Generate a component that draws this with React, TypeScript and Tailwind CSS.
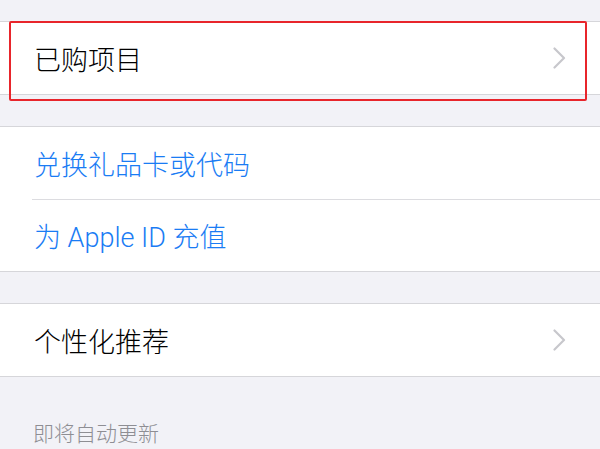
const font = { fontFamily: '"Noto Sans CJK SC", "Noto Sans", sans-serif' };
const mixed = { fontFamily: 'Roboto, "Noto Sans CJK SC", sans-serif' };

function Chevron() {
  return (
    <svg width="13" height="22" viewBox="0 0 13 22" fill="none" className="shrink-0">
      <polyline
        points="1.5,1.5 11,11 1.5,20.5"
        stroke="#c7c7cc"
        strokeWidth="2.2"
        strokeLinecap="round"
        strokeLinejoin="round"
      />
    </svg>
  );
}

function NavRow({ label }: { label: string }) {
  return (
    <div className="flex h-[72px] items-center justify-between bg-white pl-[34px] pr-[34px]">
      <span className="text-[27px] font-light leading-none text-black">{label}</span>
      <Chevron />
    </div>
  );
}

export default function App() {
  return (
    <div
      className="relative h-[449px] w-full overflow-hidden bg-[#f2f2f7]"
      style={font}
    >
      <div className="pt-[21px]">
        <section className="border-y border-[#d6d6da]">
          <NavRow label="已购项目" />
        </section>

        <section className="mt-[31px] border-y border-[#d6d6da] bg-white">
          <div className="pl-[32px]">
            <div className="flex h-[73px] items-center border-b border-[#dcdce0] pl-[2px]">
              <span className="text-[27px] font-light leading-none text-[#1a7cf4]">兑换礼品卡或代码</span>
            </div>
          </div>
          <div className="flex h-[71px] items-center pl-[34px] pt-[6px]">
            <span className="text-[27px] font-light leading-none text-[#1a7cf4]" style={mixed}>
              为 Apple ID 充值
            </span>
          </div>
        </section>

        <section className="mt-[31px] border-y border-[#d6d6da]">
          <NavRow label="个性化推荐" />
        </section>

        <div className="mt-[43px] pl-[33px] text-[21px] font-light leading-[24px] text-[#8e8e93]">
          即将自动更新
        </div>
      </div>

      {/* annotation box */}
      <div className="pointer-events-none absolute left-[9px] top-[21px] h-[80px] w-[578px] rounded-[2px] border-2 border-[#e8252b]" />
    </div>
  );
}
